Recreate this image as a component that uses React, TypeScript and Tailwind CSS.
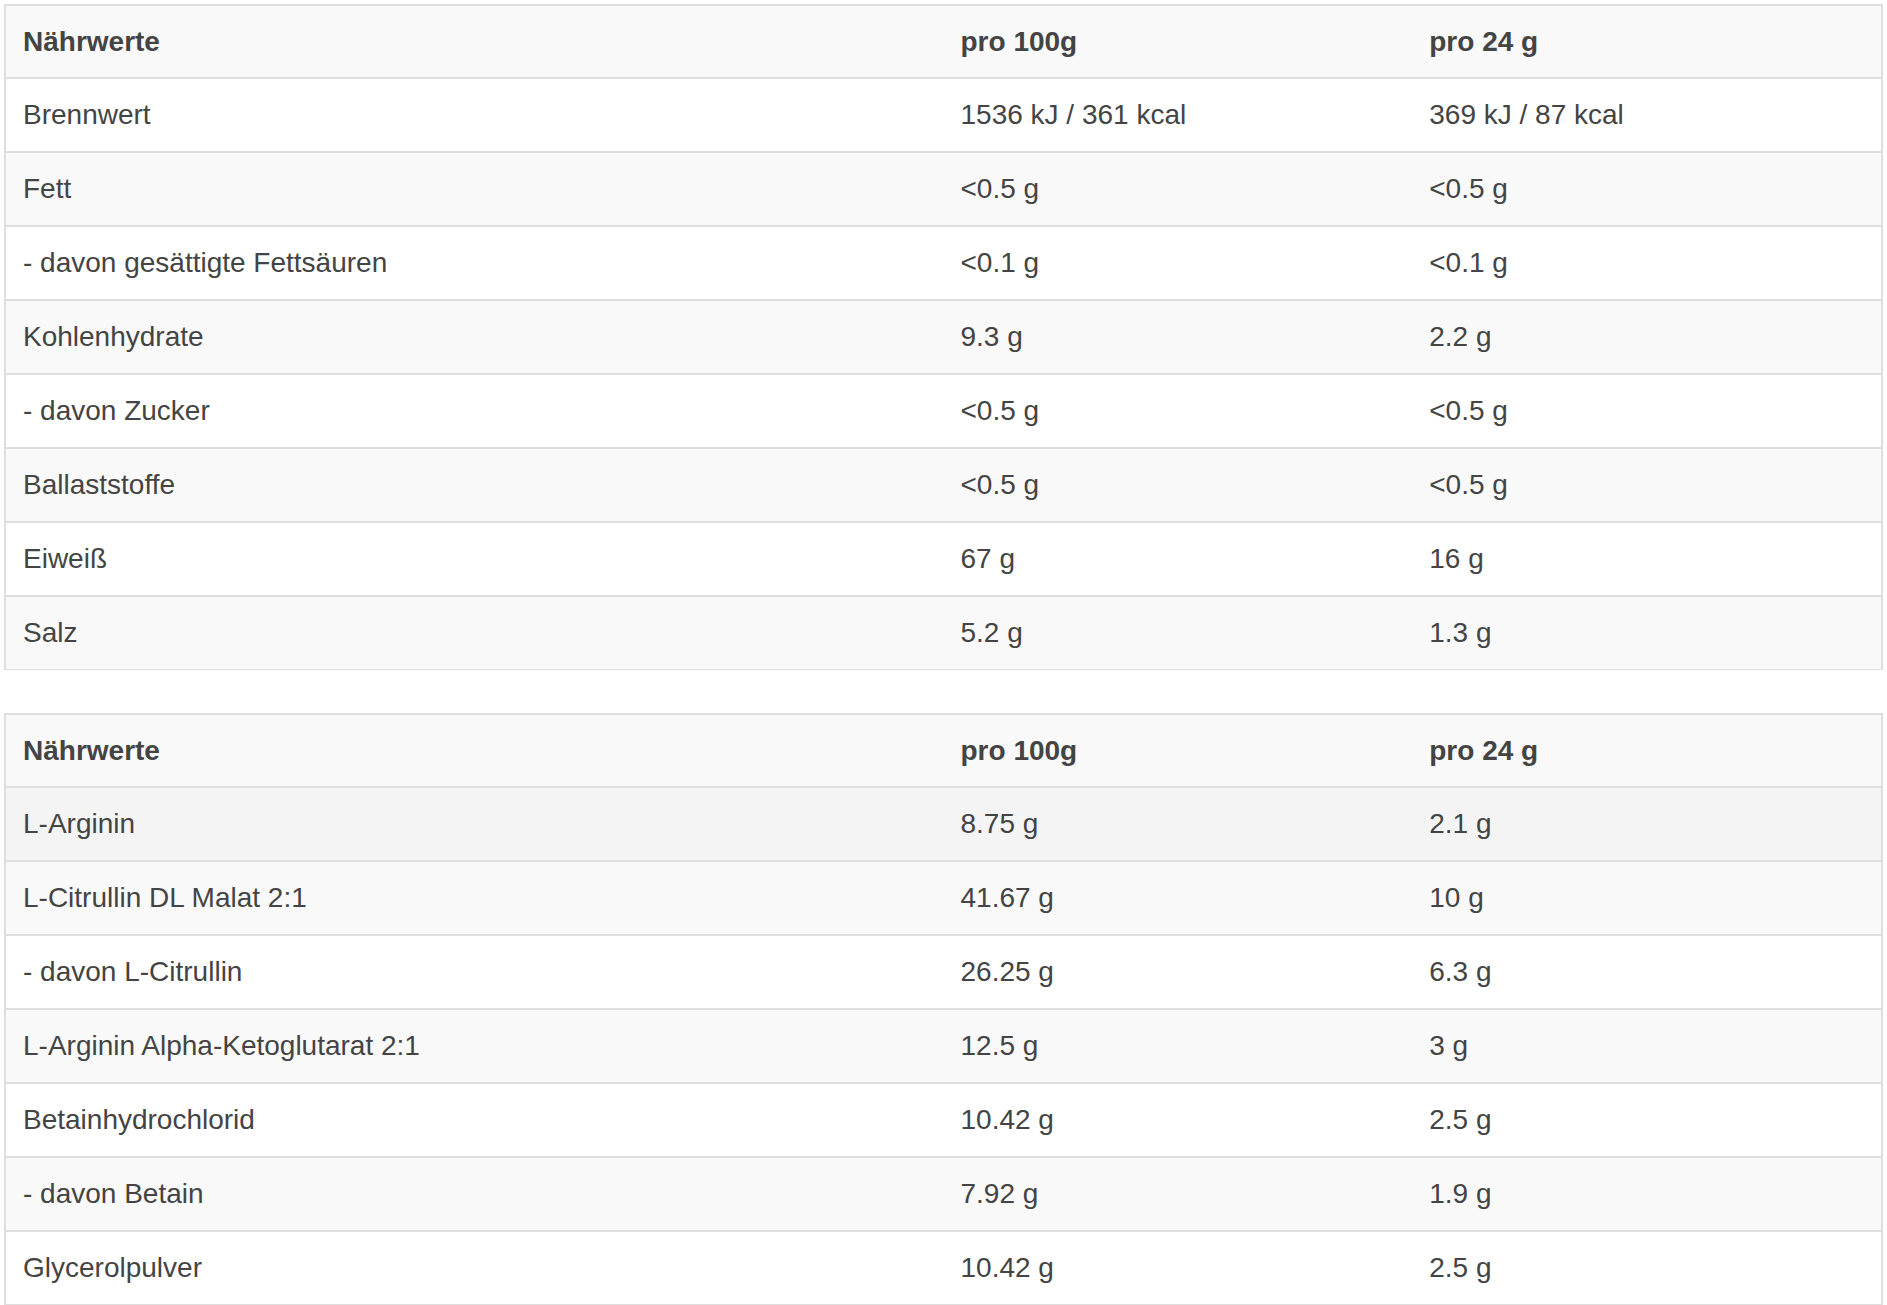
type Row = { name: string; per100: string; perServing: string };

const energyRows: Row[] = [
  { name: "Brennwert", per100: "1536 kJ / 361 kcal", perServing: "369 kJ / 87 kcal" },
  { name: "Fett", per100: "<0.5 g", perServing: "<0.5 g" },
  { name: "- davon gesättigte Fettsäuren", per100: "<0.1 g", perServing: "<0.1 g" },
  { name: "Kohlenhydrate", per100: "9.3 g", perServing: "2.2 g" },
  { name: "- davon Zucker", per100: "<0.5 g", perServing: "<0.5 g" },
  { name: "Ballaststoffe", per100: "<0.5 g", perServing: "<0.5 g" },
  { name: "Eiweiß", per100: "67 g", perServing: "16 g" },
  { name: "Salz", per100: "5.2 g", perServing: "1.3 g" },
];

const ingredientRows: Row[] = [
  { name: "L-Arginin", per100: "8.75 g", perServing: "2.1 g" },
  { name: "L-Citrullin DL Malat 2:1", per100: "41.67 g", perServing: "10 g" },
  { name: "- davon L-Citrullin", per100: "26.25 g", perServing: "6.3 g" },
  { name: "L-Arginin Alpha-Ketoglutarat 2:1", per100: "12.5 g", perServing: "3 g" },
  { name: "Betainhydrochlorid", per100: "10.42 g", perServing: "2.5 g" },
  { name: "- davon Betain", per100: "7.92 g", perServing: "1.9 g" },
  { name: "Glycerolpulver", per100: "10.42 g", perServing: "2.5 g" },
];

function NutritionTable({ rows, highlightFirst = false }: { rows: Row[]; highlightFirst?: boolean }) {
  return (
    <div className="border-x-2 border-t-2 border-b border-[#dedede]">
      {/* Header */}
      <div className="grid grid-cols-[2fr_1fr_1fr] h-[71px] items-center bg-[#f9f9f9] font-bold">
        <div className="pl-[17px]">Nährwerte</div>
        <div className="pl-[17px]">pro 100g</div>
        <div className="pl-[17px]">pro 24 g</div>
      </div>
      {rows.map((row, i) => {
        let bg = i % 2 === 0 ? "bg-white" : "bg-[#f9f9f9]";
        if (highlightFirst && i === 0) bg = "bg-[#f4f4f4]";
        return (
          <div
            key={row.name}
            className={`grid grid-cols-[2fr_1fr_1fr] h-[74px] items-center border-t-2 border-[#dedede] ${bg}`}
          >
            <div className="pl-[17px]">{row.name}</div>
            <div className="pl-[17px]">{row.per100}</div>
            <div className="pl-[17px]">{row.perServing}</div>
          </div>
        );
      })}
    </div>
  );
}

export default function App() {
  return (
    <div
      className="min-h-screen bg-white p-[4px] text-[28px] leading-none text-[#444444]"
      style={{ fontFamily: '"Liberation Sans", Helvetica, Arial, sans-serif' }}
    >
      <NutritionTable rows={energyRows} />
      <div className="mt-[43px]">
        <NutritionTable rows={ingredientRows} highlightFirst />
      </div>
    </div>
  );
}
